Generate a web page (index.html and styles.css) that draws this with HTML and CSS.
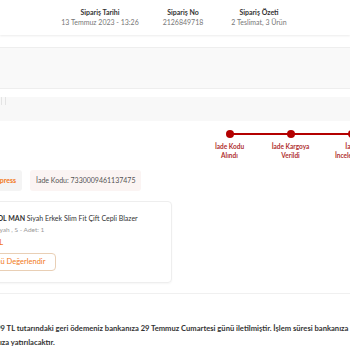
FILE: index.html
```html
<!DOCTYPE html>
<html lang="tr">
<head>
    <meta charset="UTF-8">
    <meta name="viewport" content="width=device-width, initial-scale=1.0">
    <title>Sipariş Detayı</title>
    <link rel="stylesheet" href="styles.css">
</head>
<body>
    <header class="summary">
        <div class="summary-item first">
            <b>Sipariş Tarihi</b>
            <span>13 Temmuz 2023 - 13:26</span>
        </div>
        <div class="summary-item second">
            <b>Sipariş No</b>
            <span>2126849718</span>
        </div>
        <div class="summary-item third">
            <b>Sipariş Özeti</b>
            <span>2 Teslimat, 3 Ürün</span>
        </div>
    </header>

    <div class="address-box"></div>
    <div class="note-box"><i></i></div>

    <main class="content">
        <ul class="timeline">
            <li class="step"><span class="dot"></span><p>İade Kodu<br>Alındı</p></li>
            <li class="step"><span class="dot"></span><p>İade Kargoya<br>Verildi</p></li>
            <li class="step"><span class="dot"></span><p>İade<br>İncelemede</p></li>
        </ul>

        <div class="badges">
            <span class="badge express">Express</span>
            <span class="badge code">İade Kodu: 7330009461137475</span>
        </div>

        <div class="product">
            <div class="product-info">
                <p class="name"><b>TRENDYOL MAN</b> Siyah Erkek Slim Fit Çift Cepli Blazer</p>
                <p class="meta">Renk: Siyah , S - Adet: 1</p>
                <p class="price">1.299,99 TL</p>
                <button class="rate">Ürünü Değerlendir</button>
            </div>
        </div>
    </main>

    <section class="refund">
        <p>1.299,99 TL tutarındaki geri ödemeniz bankanıza 29 Temmuz Cumartesi günü iletilmiştir. İşlem süresi bankanıza bağlı olarak 3-7 iş günü içinde</p>
        <p class="second-line">kartınıza yatırılacaktır.</p>
    </section>
</body>
</html>
```

FILE: styles.css
```css
body {
    margin: 0;
    padding: 0;
    font-family: Lato, "Open Sans", sans-serif;
    background-color: #ffffff;
    color: #333333;
    overflow: hidden;
}
p {
    margin: 0;
}

.summary {
    display: flex;
    height: 35px;
    padding-left: 60px;
    background-color: #ffffff;
    box-shadow: 0 1px 2px rgba(0, 0, 0, 0.08);
    font-size: 7px;
    text-align: center;
}
.summary-item {
    display: flex;
    flex-direction: column;
    padding-top: 7px;
    line-height: 10px;
}
.summary-item b {
    color: #333333;
}
.summary-item span {
    color: #777777;
}
.first {
    width: 80px;
}
.second {
    width: 70px;
    margin-left: 8px;
}
.third {
    width: 80px;
    margin-left: 1px;
}

.address-box {
    height: 40px;
    margin-top: 12px;
    background-color: #f9f9f9;
    border-top: 1px solid #eeeeee;
    border-bottom: 1px solid #eeeeee;
}
.note-box {
    height: 24px;
    margin-top: 7px;
    background-color: #f8f8f8;
}
.note-box i {
    display: block;
    width: 3px;
    height: 8px;
    margin: 8px 0 0 1px;
    border-left: 1px solid #e4e4e4;
    border-right: 1px solid #e4e4e4;
}

.content {
    margin-left: -14px;
}
.timeline {
    display: flex;
    list-style: none;
    margin: 9px 0 0 213px;
    padding: 0;
}
.step {
    position: relative;
    width: 61px;
    flex-shrink: 0;
    text-align: center;
}
.step::after {
    content: "";
    position: absolute;
    top: 3px;
    left: 50%;
    width: 61px;
    height: 1.5px;
    background-color: #b30000;
}
.dot {
    display: block;
    width: 8px;
    height: 8px;
    margin: 0 auto;
    border-radius: 50%;
    background-color: #b30000;
}
.step p {
    margin-top: 4px;
    font-size: 6.5px;
    line-height: 9px;
    font-weight: bold;
    color: #b03030;
}

.badges {
    display: flex;
    gap: 8px;
    margin-top: 10px;
}
.badge {
    padding: 0 6px;
    height: 21px;
    line-height: 21px;
    font-size: 7px;
    border-radius: 3px;
}
.express {
    background-color: #f4f4f4;
    color: #f27a1a;
    font-weight: bold;
}
.code {
    background-color: #fbf4f3;
    color: #555555;
}

.product {
    width: 184px;
    height: 80px;
    margin-top: 10px;
    border: 1px solid #eeeeee;
    border-radius: 4px;
    box-shadow: 0 1px 2px rgba(0, 0, 0, 0.04);
}
.product-info {
    margin-left: -16px;
    padding-top: 10px;
}
.name {
    margin-left: -1px;
    font-size: 7px;
    line-height: 12px;
    color: #333333;
}
.meta {
    margin-left: 6px;
    font-size: 6.5px;
    line-height: 12px;
    color: #999999;
}
.price {
    margin-left: -10px;
    font-size: 8px;
    line-height: 12px;
    font-weight: bold;
    color: #f27a1a;
}
.rate {
    margin: 3px 0 0 2px;
    height: 18px;
    padding: 0 10px;
    font-family: inherit;
    font-size: 7.5px;
    color: #f27a1a;
    background-color: #ffffff;
    border: 1px solid #e9cfb5;
    border-radius: 4px;
}

.refund {
    margin-top: 10px;
    padding-top: 27px;
    border-top: 1px solid #f0f0f0;
    white-space: nowrap;
    font-size: 7.6px;
    line-height: 14px;
    font-weight: bold;
    color: #333333;
}
.refund p {
    margin-left: -25px;
}
.refund .second-line {
    margin-left: -20px;
}
```
